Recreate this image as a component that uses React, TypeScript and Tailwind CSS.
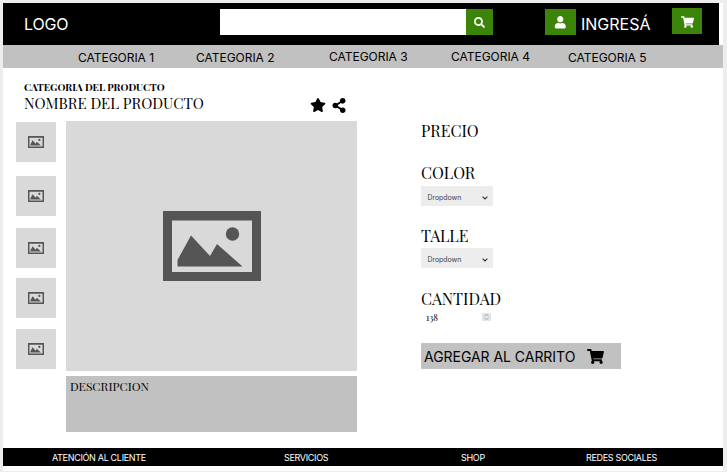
import React from "react";
import { FaSearch, FaUser, FaShoppingCart, FaStar, FaShareAlt } from "react-icons/fa";

const serif = "font-['Playfair_Display','Liberation_Serif',serif]";

function Picture({ className }: { className: string }) {
  return (
    <svg viewBox="0 0 98 70" className={className} preserveAspectRatio="none">
      <path fill="#555" fillRule="evenodd" d="M0 0H98V70H0ZM9 9.500V61H89V9.500Z" />
      <path fill="#555" d="M14.500 55.500V49L28 24.500L47 45L54 33L79.500 55.500Z" />
      <circle cx="69.500" cy="23" r="6.700" fill="#555" />
    </svg>
  );
}

function Thumb({ className }: { className: string }) {
  return (
    <div className={`flex h-10 w-10 items-center justify-center bg-[#d9d9d9] ${className}`}>
      <Picture className="h-3 w-4" />
    </div>
  );
}

function Dropdown() {
  return (
    <button className="flex h-5 w-[72px] items-center justify-between bg-[#ededed] pl-[6.5px] pr-[5px] pt-[3px] text-[7px] leading-none text-[#444]">
      <span className="tracking-[-0.01em]">Dropdown</span>
      <svg viewBox="0 0 6 4" className="h-1 w-1.5" fill="none" stroke="#333" strokeWidth="1.100">
        <path d="M0.600 0.600L3 3L5.400 0.600" />
      </svg>
    </button>
  );
}

function Heading({ children, className }: { children: React.ReactNode; className: string }) {
  return <h2 className={`${serif} w-max whitespace-nowrap text-[16px] leading-5 ${className}`}>{children}</h2>;
}

export default function App() {
  return (
    <div className="h-[472px] w-[727px] overflow-hidden bg-[#ededed] pl-[3px] pt-[3px] font-['Inter','Liberation_Sans',sans-serif] text-black">
      <div className="flex h-[468px] w-[720px] flex-col bg-white">
        <header className="flex h-[42px] w-[716px] shrink-0 items-start bg-black text-white">
          <div className="ml-[21px] mt-[11px] w-[196px] text-[16px] leading-5 tracking-[-0.01em]">LOGO</div>
          <div className="mt-1.5 h-[26px] w-[246px] bg-white" />
          <button className="mt-1.5 flex h-[26px] w-[27px] items-center justify-center bg-[#3a8509]">
            <FaSearch className="size-[11px]" />
          </button>
          <button className="ml-[52px] mt-1.5 flex h-[26px] w-[31px] items-center justify-center bg-[#3a8509] pt-px">
            <FaUser className="size-[12.5px]" />
          </button>
          <div className="ml-[5px] mt-[11px] w-[91px] text-[16px] leading-5">INGRESÁ</div>
          <button className="mt-[5px] flex h-[26px] w-[30px] items-center justify-center bg-[#3a8509] pt-px">
            <FaShoppingCart className="h-3 w-[13px]" />
          </button>
        </header>

        <nav className="flex h-[23px] shrink-0 items-start bg-[#c1c1c1] pl-[75px] text-[12px] leading-4 tracking-[-0.03px]">
          <span className="mt-[5px] w-[118px]">CATEGORIA 1</span>
          <span className="mt-[5px] w-[133px]">CATEGORIA 2</span>
          <span className="mt-1 w-[122px]">CATEGORIA 3</span>
          <span className="mt-1 w-[117px]">CATEGORIA 4</span>
          <span className="mt-[5px]">CATEGORIA 5</span>
        </nav>

        <main className="flex h-[380px] shrink-0">
          <section className="w-[354px]">
            <div className="flex h-[53px] pl-[21px]">
              <div className={`w-[286px] pt-[13px] whitespace-nowrap ${serif}`}>
                <p className="text-[10px] leading-[13px] font-bold">CATEGORIA DEL PRODUCTO</p>
                <h1 className="text-[15px] leading-[18px]">NOMBRE DEL PRODUCTO</h1>
              </div>
              <div className="flex gap-[6px] pt-[30px]">
                <FaStar className="h-[14px] w-4" />
                <FaShareAlt className="h-[15px] w-[14px]" />
              </div>
            </div>
            <div className="flex pl-[13px]">
              <div className="w-[50px] pt-px">
                <Thumb className="" />
                <Thumb className="mt-[14px]" />
                <Thumb className="mt-3" />
                <Thumb className="mt-2.5" />
                <Thumb className="mt-[11px]" />
              </div>
              <div>
                <div className="flex h-[250px] w-[291px] items-center justify-center bg-[#d9d9d9]">
                  <Picture className="h-[70px] w-[98px]" />
                </div>
                <div className={`mt-[5px] h-14 w-[291px] bg-[#c1c1c1] pl-1 pt-[2px] text-[12px] leading-4 ${serif}`}>
                  DESCRIPCION
                </div>
              </div>
            </div>
          </section>

          <section className="pl-16">
            <Heading className="mt-[53px]">PRECIO</Heading>
            <Heading className="mt-[22px]">COLOR</Heading>
            <div className="mt-[3px]">
              <Dropdown />
            </div>
            <Heading className="mt-5">TALLE</Heading>
            <div className="mt-[2px]">
              <Dropdown />
            </div>
            <Heading className="mt-[21px]">CANTIDAD</Heading>
            <div className="mt-[2px] flex h-3 w-[70px] items-center justify-between pl-[5px]">
              <span className={`text-[9px] leading-3 ${serif}`}>138</span>
              <span className="flex h-2 w-[9px] items-center justify-center bg-[#e3e3e8]">
                <svg viewBox="0 0 5 6" className="h-1.5 w-[5px]" fill="none" stroke="#999" strokeWidth="0.800">
                  <path d="M0.500 2L2.500 0.500L4.500 2M0.500 4L2.500 5.500L4.500 4" />
                </svg>
              </span>
            </div>
            <button className="mt-5 flex h-[26px] w-[200px] items-center bg-[#c1c1c1] pl-[3px]">
              <span className="w-[163px] pt-[2px] text-left whitespace-nowrap text-[14px] leading-5 tracking-[-0.04px]">AGREGAR AL CARRITO</span>
              <FaShoppingCart className="h-[15px] w-[17px]" />
            </button>
          </section>
        </main>

        <footer className="flex h-[18px] shrink-0 items-center bg-black pl-[49px] pt-px whitespace-nowrap text-[9px] leading-none tracking-[-0.32px] text-white">
          <span className="w-[232px]">ATENCIÓN AL CLIENTE</span>
          <span className="w-[177px]">SERVICIOS</span>
          <span className="w-[125px]">SHOP</span>
          <span>REDES SOCIALES</span>
        </footer>
      </div>
    </div>
  );
}
